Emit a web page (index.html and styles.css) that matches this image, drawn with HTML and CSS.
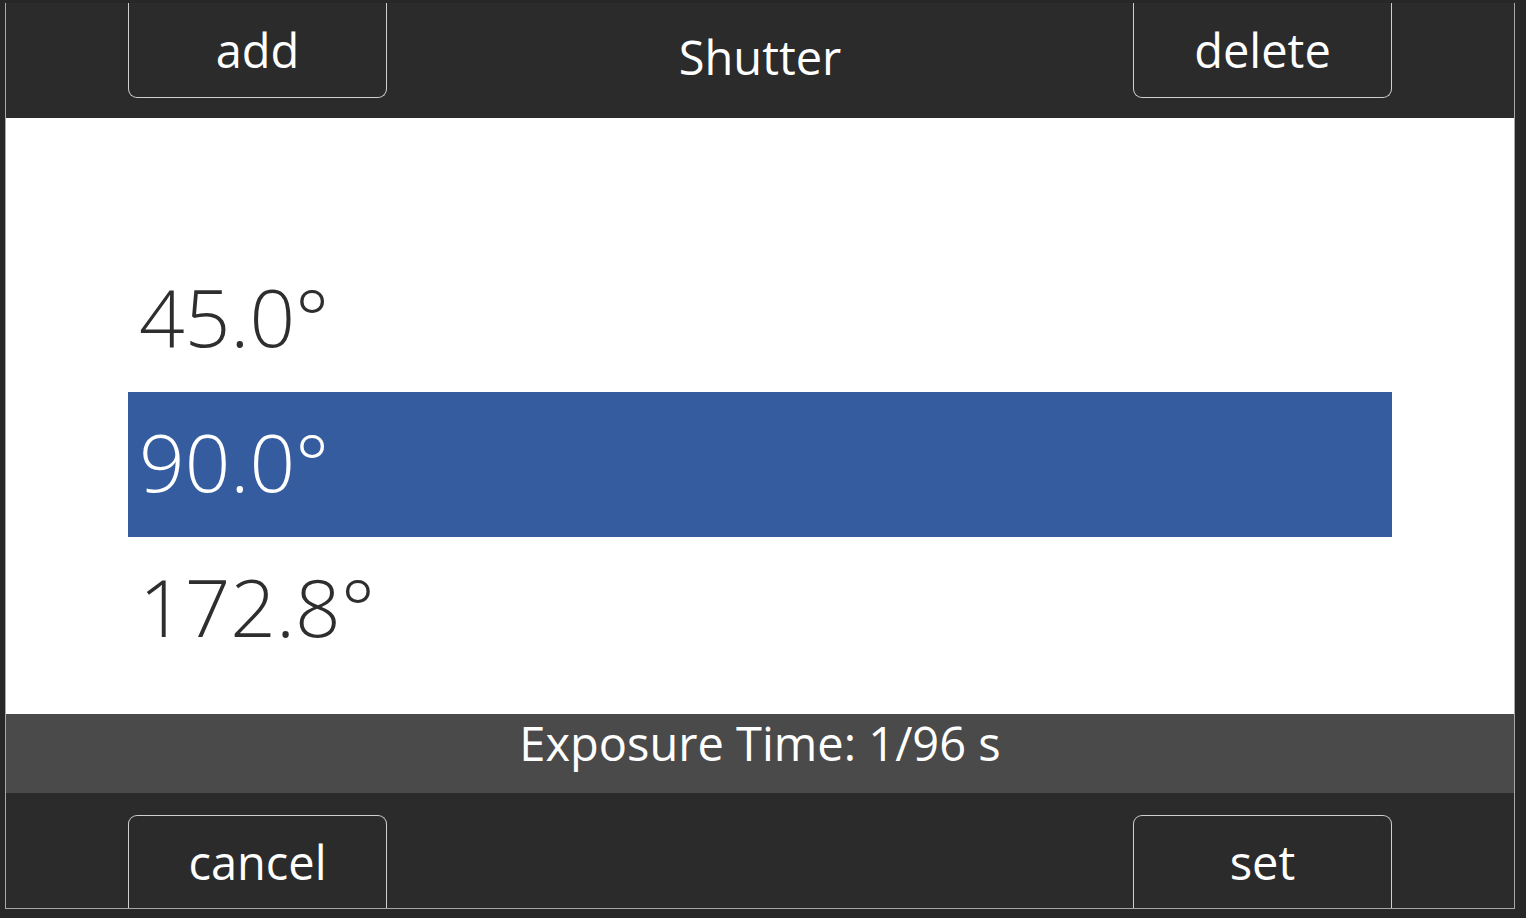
FILE: index.html
```html
<!DOCTYPE html>
<html lang="en">
<head>
<meta charset="utf-8">
<title>Shutter</title>
<link rel="stylesheet" href="styles.css">
</head>
<body>
<div class="frame">
  <header class="topbar">
    <button class="btn btn-top">add</button>
    <div class="title">Shutter</div>
    <button class="btn btn-top">delete</button>
  </header>
  <main class="list">
    <div class="row">45.0°</div>
    <div class="row selected">90.0°</div>
    <div class="row">172.8°</div>
  </main>
  <div class="status">Exposure Time: 1/96 s</div>
  <footer class="bottombar">
    <button class="btn btn-bottom">cancel</button>
    <button class="btn btn-bottom">set</button>
  </footer>
</div>
</body>
</html>
```

FILE: styles.css
```css
html, body {
  margin: 0;
  padding: 0;
}
body {
  background: #272727;
  width: 1526px;
  height: 918px;
  overflow: hidden;
  font-family: "Open Sans", "Noto Sans", sans-serif;
}
.frame {
  margin: 3px 0 0 5px;
  width: 1510px;
  height: 906px;
  box-sizing: border-box;
  border: 1px solid #a8a8a8;
  border-top: none;
  background: #2b2b2b;
  display: flex;
  flex-direction: column;
  overflow: hidden;
}
.topbar {
  height: 115px;
  flex: none;
  display: grid;
  grid-template-columns: 259px 1fr 259px;
  padding: 0 122px;
  align-items: start;
}
.btn {
  font-family: "Open Sans", "Noto Sans", sans-serif;
  font-size: 47px;
  font-weight: 500;
  color: #ffffff;
  background: #2b2b2b;
  border: 1px solid #cfcfcf;
  box-sizing: border-box;
  width: 259px;
  padding: 0;
  margin: 0;
  text-align: center;
}
.btn-top {
  height: 95px;
  border-top: none;
  border-radius: 0 0 9px 9px;
  line-height: 92px;
}
.title {
  text-align: center;
  color: #ffffff;
  font-size: 47px;
  font-weight: 500;
  line-height: 108px;
}
.list {
  height: 596px;
  flex: none;
  background: #ffffff;
  box-sizing: border-box;
  padding: 129px 122px 0;
}
.row {
  height: 145px;
  box-sizing: border-box;
  padding-left: 11px;
  font-size: 80px;
  font-weight: 300;
  line-height: 138px;
  color: #2e2e2e;
}
.row.selected {
  background: #355c9f;
  color: #ffffff;
}
.status {
  height: 79px;
  flex: none;
  background: #4a4a4a;
  color: #ffffff;
  text-align: center;
  font-size: 47px;
  font-weight: 500;
  line-height: 58px;
}
.bottombar {
  height: 115px;
  flex: none;
  display: flex;
  justify-content: space-between;
  padding: 22px 122px 0;
  box-sizing: border-box;
}
.btn-bottom {
  height: 93px;
  border-bottom: none;
  border-radius: 9px 9px 0 0;
  line-height: 86px;
}
```
